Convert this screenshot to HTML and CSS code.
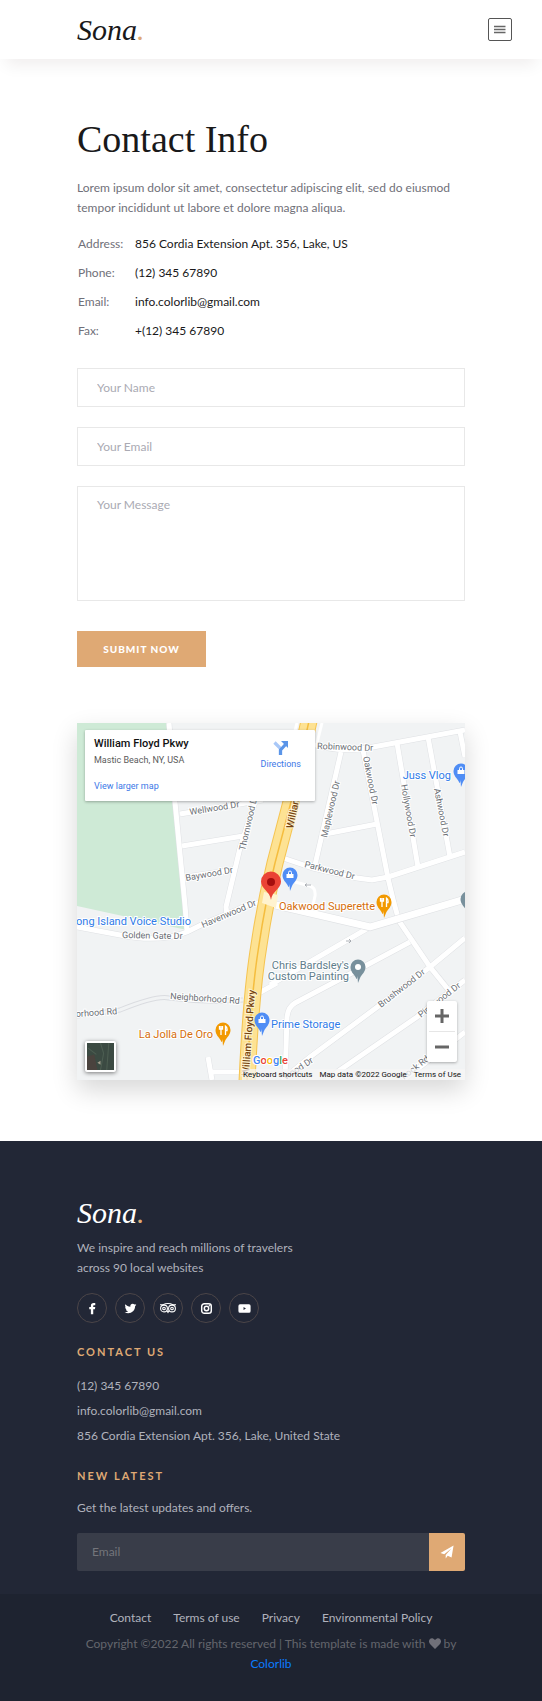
FILE: index.html
```html
<!DOCTYPE html>
<html lang="en">
<head>
<meta charset="utf-8">
<meta name="viewport" content="width=device-width, initial-scale=1">
<title>Sona - Contact</title>
<link rel="stylesheet" href="styles.css">
</head>
<body>
<header class="site-header">
  <a class="logo" href="#">Sona<span class="logo-dot">.</span></a>
  <button class="menu-btn" type="button" aria-label="Open menu">
    <svg viewBox="0 0 12 10" width="12" height="10"><path d="M0 1.500h11.500M0 4.500h11.500M0 7.500h11.500" stroke="#666" stroke-width="1.600"/></svg>
  </button>
</header>

<main class="container">
  <section class="intro">
    <h1>Contact Info</h1>
    <p>Lorem ipsum dolor sit amet, consectetur adipiscing elit, sed do eiusmod<br>tempor incididunt ut labore et dolore magna aliqua.</p>
    <table class="details">
      <tr><th scope="row">Address:</th><td>856 Cordia Extension Apt. 356, Lake, US</td></tr>
      <tr><th scope="row">Phone:</th><td>(12) 345 67890</td></tr>
      <tr><th scope="row">Email:</th><td>info.colorlib@gmail.com</td></tr>
      <tr><th scope="row">Fax:</th><td>+(12) 345 67890</td></tr>
    </table>
  </section>

  <form class="contact-form">
    <input class="field" type="text" placeholder="Your Name" aria-label="Your Name">
    <input class="field" type="email" placeholder="Your Email" aria-label="Your Email">
    <textarea class="field field-message" placeholder="Your Message" aria-label="Your Message"></textarea>
    <button class="submit-btn" type="submit">SUBMIT NOW</button>
  </form>

  <section class="map" aria-label="Map">
    <svg class="map-canvas" viewBox="0 0 388 357">
      <defs>
        <g id="roads">
          <path d="M92 0L98 79L108 182L110 208"/>
          <path d="M103 91L163 81L186 77"/>
          <path d="M105 123L166 113"/>
          <path d="M108 154L157 147"/>
          <path d="M178 79L163 125L149 184L150 192"/>
          <path d="M0 204L43 212Q82 220 110 209L126 201L160 187Q178 177 190 181"/>
          <path d="M232 20Q262 31 296 24L388 7"/>
          <path d="M264 29L238 142"/>
          <path d="M286 27L311 155L317 180L322 198L353 244L374 270"/>
          <path d="M243 112L300 101"/>
          <path d="M320 20L341 144"/>
          <path d="M351 14L373 134"/>
          <path d="M383 9L388 34"/>
          <path d="M206 135L236 145L280 155L295 157L311 154L388 129"/>
          <path d="M193 262L293 204"/>
          <path d="M333 219L290 242L218 280Q211 284 210 294L208 357"/>
          <path d="M388 215L353 244L303 282L233 334L205 357"/>
          <path d="M388 257L340 294L263 347L250 357"/>
          <path d="M388 309L356 334L326 357"/>
          <path d="M182 270L200 260"/>
          <path d="M131 334L135 357M134 349H166"/>
        </g>
        <g id="pin">
          <path d="M0 14C-1-1 0 14-2 9C-4 5-7.500 3-7.500-2A7.500 7.500 0 0 1 7.500-2C7.500 3 4 5 2 9Z"/>
        </g>
      </defs>
      <rect width="388" height="357" fill="#f1f3f4"/>
      <path d="M0 0H91L110 207L0 183Z" fill="#ceead6"/>
      <use href="#roads" class="road-edge"/>
      <path class="road-edge-thin" d="M0 293L43 287Q80 272 92 275Q130 280 166 277"/>
      <use href="#roads" class="road-fill"/>
      <path class="road-core" d="M0 293L43 287Q80 272 92 275Q130 280 166 277"/>
      <path class="lane" d="M218 159L233 163Q239 165 238 173L236 182M220 0L217 12M245 0L240 20"/>
      <path class="road-edge main" d="M190 180L293 204L388 176"/>
      <path class="road-fill main" d="M190 180L293 204L388 176"/>
      <g fill="none">
        <path stroke="#f5c451" stroke-width="17" d="M232-2L214 79L198 140Q188 181 182 222Q174 270 170 359"/>
        <path stroke="#fde293" stroke-width="15" d="M232-2L214 79L198 140Q188 181 182 222Q174 270 170 359"/>
        <path stroke="#f5bd3e" stroke-width="1.500" d="M232-2L214 79L198 140Q188 181 182 222Q174 270 170 359"/>
      </g>
      <path d="M187 169L201 172L199 185L185 180Z" fill="#fff3cf"/>
      <g class="street">
        <text transform="translate(113 92) rotate(-9)">Wellwood Dr</text>
        <text transform="translate(168 128) rotate(-77)">Thornwood Dr</text>
        <text transform="translate(109 158) rotate(-10)">Baywood Dr</text>
        <text transform="translate(126 205) rotate(-23)">Havenwood Dr</text>
        <text x="45" y="215" transform="rotate(1 45 215)">Golden Gate Dr</text>
        <text transform="translate(240 26) rotate(2)">Robinwood Dr</text>
        <text transform="translate(250 115) rotate(-77)">Maplewood Dr</text>
        <text transform="translate(286 34) rotate(79)">Oakwood Dr</text>
        <text transform="translate(324 62) rotate(80)">Hollywood Dr</text>
        <text transform="translate(357 66) rotate(79)">Ashwood Dr</text>
        <text transform="translate(227 144) rotate(14)">Parkwood Dr</text>
        <text transform="translate(304 285) rotate(-38)">Brushwood Dr</text>
        <text transform="translate(344 295) rotate(-38)">Pinewood Dr</text>
        <text transform="translate(209 357) rotate(-33)">wood Dr</text>
        <text transform="translate(327 357) rotate(-38)">Rock Rd</text>
        <text transform="translate(93 276) rotate(4)">Neighborhood Rd</text>
        <text transform="translate(-1 294) rotate(-4)">orhood Rd</text>
      </g>
      <g class="highway">
        <text transform="translate(216 106) rotate(-78)">William Floyd</text>
        <text transform="translate(172 353) rotate(-86)">William Floyd Pkwy</text>
      </g>
      <g class="poi">
        <text x="114" y="202" class="poi-blue" text-anchor="end">Long Island Voice Studio</text>
        <text x="374" y="56" class="poi-blue" text-anchor="end">Juss Vlog</text>
        <text x="194" y="305" class="poi-blue">Prime Storage</text>
        <text x="298" y="187" class="poi-orange" text-anchor="end">Oakwood Superette</text>
        <text x="136" y="315" class="poi-orange" text-anchor="end">La Jolla De Oro</text>
        <text x="272" y="246" class="poi-grey" text-anchor="end">Chris Bardsley's</text>
        <text x="272" y="257" class="poi-grey" text-anchor="end">Custom Painting</text>
      </g>
      <g fill="#4f8df5"><use href="#pin" x="384" y="50"/><use href="#pin" x="213" y="154"/><use href="#pin" x="185" y="299"/></g>
      <g fill="#f29900"><use href="#pin" x="307" y="181"/><use href="#pin" x="146" y="309"/></g>
      <g fill="#78909c"><use href="#pin" x="281" y="246"/><use href="#pin" x="391" y="178"/></g>
      <circle cx="281" cy="244" r="3" fill="#fff"/>
      <g fill="#fff" stroke="#fff">
        <path d="M380.500 47h7v4h-7zM209.500 151h7v4h-7zM181.500 296h7v4h-7z" stroke="none"/>
        <path fill="none" d="M382.500 47v-1.500a1.500 1.500 0 0 1 3 0V47M211.500 151v-1.500a1.500 1.500 0 0 1 3 0v1.500M183.500 296v-1.500a1.500 1.500 0 0 1 3 0v1.500"/>
        <path fill="none" stroke-width="1.300" d="M305 175v9M303.500 175v3h3v-3M309.500 184v-9q2 1 1.500 4.500h-1.500M144 303v9M142.500 303v3h3v-3M148.500 312v-9q2 1 1.500 4.500h-1.500"/>
      </g>
      <path d="M194 177C193 168 184 166 184 158.500A10 10 0 0 1 204 158.500C204 166 195 168 194 177Z" fill="#ea4335"/>
      <circle cx="194" cy="159" r="4" fill="#a50e0e"/>
      <path d="M228 162h6M228 162l2-1.500M228 162l2 1.500M269 218h5M274 218l-2-2M274 218l-2 2" stroke="#9aa0a6" fill="none" stroke-width=".8"/>
      <g class="brand"><text x="176" y="341"><tspan fill="#4285f4">G</tspan><tspan fill="#ea4335">o</tspan><tspan fill="#fbbc04">o</tspan><tspan fill="#4285f4">g</tspan><tspan fill="#34a853">l</tspan><tspan fill="#ea4335">e</tspan></text></g>
    </svg>
    <div class="place-card">
      <div class="place-info">
        <strong>William Floyd Pkwy</strong>
        <span>Mastic Beach, NY, USA</span>
        <a href="#">View larger map</a>
      </div>
      <a class="directions" href="#">
        <svg viewBox="0 0 16 16" width="16" height="16"><path d="M1.500 2.500L7.500 8.500V15" fill="none" stroke="#a9c8f8" stroke-width="3.200"/><path d="M7.500 15V10L12.500 4.500" fill="none" stroke="#5b95e8" stroke-width="3.200"/><path d="M8 1h7v7z" fill="#5b95e8"/></svg>
        Directions
      </a>
    </div>
    <button class="satellite" type="button" aria-label="Show satellite imagery">
      <svg viewBox="0 0 26 26" width="27" height="27"><rect width="26" height="26" fill="#3b4a42"/><path d="M0 13L7 11L10 26H0Z" fill="#4a433e"/><path d="M13 0L16 10L13 26M21 0L19 26M1 5L9 11" stroke="#4d5e52" fill="none"/><path d="M10 19l3-2v4z" fill="#a39f8d"/></svg>
    </button>
    <div class="zoom">
      <button type="button" aria-label="Zoom in"><svg viewBox="0 0 14 14" width="14" height="14"><path d="M7 0v14M0 7h14" stroke="#666" stroke-width="3"/></svg></button>
      <button type="button" aria-label="Zoom out"><svg viewBox="0 0 14 14" width="14" height="14"><path d="M0 7h14" stroke="#666" stroke-width="3"/></svg></button>
    </div>
    <div class="attribution"><a href="#">Keyboard shortcuts</a><span>Map data ©2022 Google</span><a href="#">Terms of Use</a></div>
  </section>
</main>

<footer class="site-footer">
  <div class="container footer-main">
    <a class="logo" href="#">Sona<span class="logo-dot">.</span></a>
    <p class="tagline">We inspire and reach millions of travelers<br>across 90 local websites</p>
    <nav class="social" aria-label="Social">
      <a href="#" aria-label="Facebook"><svg viewBox="0 0 16 16"><path fill="#fff" d="M6 15V9H4V6.300h2V4.800C6 2.400 7.300 1.300 9.400 1.300h2v2.600H10c-.9 0-1.100.4-1.100 1.200v1.200h2.500L11 9H8.900v6z"/></svg></a>
      <a href="#" aria-label="Twitter"><svg viewBox="0 0 16 16"><path fill="#fff" d="M15.200 3.500c-.6.300-1.100.4-1.700.5.600-.4 1.100-1 1.300-1.600-.6.300-1.200.6-1.900.7A3 3 0 0 0 7.800 5.800C5.300 5.700 3.200 4.500 1.700 2.700c-.8 1.400-.4 3.100.9 4-.5 0-.9-.2-1.300-.4 0 1.500 1 2.700 2.400 3-.5.100-.9.100-1.400 0 .4 1.200 1.500 2 2.800 2.100-1.200 1-2.800 1.500-4.400 1.200C6.400 16 13.700 12.300 13.700 5c.6-.4 1.100-.9 1.500-1.500z"/></svg></a>
      <a href="#" aria-label="Tripadvisor"><svg viewBox="0 0 16 16" class="wide"><g fill="none" stroke="#fff" stroke-width="1.100"><circle cx="4" cy="8.500" r="3.400"/><circle cx="12" cy="8.500" r="3.400"/><circle cx="4" cy="8.500" r="1.300"/><circle cx="12" cy="8.500" r="1.300"/><path d="M0 4.800h3Q8 2.200 13 4.800h3M6.800 10.500L8 12.500l1.200-2"/></g></svg></a>
      <a href="#" aria-label="Instagram"><svg viewBox="0 0 16 16"><g fill="none" stroke="#fff" stroke-width="1.800"><rect x="2.100" y="2.100" width="11.800" height="11.800" rx="3.200"/><circle cx="8" cy="8" r="2.700"/></g><circle cx="11.500" cy="4.600" r=".9" fill="#fff"/></svg></a>
      <a href="#" aria-label="YouTube"><svg viewBox="0 0 16 16"><path fill="#fff" fill-rule="evenodd" d="M2.500 2.700h11q2 0 2 2.300v6q0 2.300-2 2.300h-11q-2 0-2-2.300V5q0-2.300 2-2.300zM6.800 6.300v3.400L9.800 8z"/></svg></a>
    </nav>
    <h2>CONTACT US</h2>
    <ul class="contacts">
      <li>(12) 345 67890</li>
      <li>info.colorlib@gmail.com</li>
      <li>856 Cordia Extension Apt. 356, Lake, United State</li>
    </ul>
    <h2>NEW LATEST</h2>
    <p class="offer">Get the latest updates and offers.</p>
    <form class="newsletter">
      <input type="email" placeholder="Email" aria-label="Email">
      <button type="submit" aria-label="Subscribe"><svg viewBox="0 0 16 16" width="14" height="14"><path fill="#fff" d="M15.500.5L13.200 14.200L8.800 12.400L6.500 15.500V11.500L13 4L4.800 10.700L.5 9z"/></svg></button>
    </form>
  </div>
  <div class="footer-bottom">
    <nav class="links" aria-label="Footer"><a href="#">Contact</a><a href="#">Terms of use</a><a href="#">Privacy</a><a href="#">Environmental Policy</a></nav>
    <p>Copyright ©2022 All rights reserved | This template is made with <svg class="heart" viewBox="0 0 12 11" width="12" height="11"><path fill="#707079" d="M6 11L1 6C-1.500 3 1-.5 4 .5Q5.300 1 6 2Q6.700 1 8 .5C11-.5 13.500 3 11 6Z"/></svg> by<br><a href="#">Colorlib</a></p>
  </div>
</footer>
</body>
</html>
```
FILE: styles.css
```css
* { box-sizing: border-box; }
body { margin: 0; background: #fff; color: #707079; font: 12px/20px Lato, "Open Sans", sans-serif; }
h1, h2, p, ul { margin: 0; padding: 0; }
a { color: inherit; text-decoration: none; }
button { padding: 0; border: 0; font: inherit; cursor: pointer; }
input, textarea { font: inherit; min-width: 0; border-radius: 0; }
.container { padding: 0 77px; }

.site-header { display: flex; align-items: center; justify-content: space-between; height: 59px; padding: 0 30px 0 77px; box-shadow: 0 12px 15px -6px rgba(36, 11, 12, .07); }
.logo { display: block; font: italic 30px/34px "Liberation Serif", serif; color: #19191a; }
.logo-dot { color: #dfa974; }
.menu-btn { display: grid; place-items: center; width: 24px; height: 23px; background: #fff; border: 1px solid #555; border-radius: 2px; }

.intro { padding-top: 56px; }
h1 { font: 38px/48px "Liberation Serif", serif; color: #19191a; }
.intro p { margin-top: 15px; }
.details { margin-top: 11px; border-collapse: collapse; }
.details th, .details td { height: 29px; padding: 0; text-align: left; font-weight: 400; }
.details th { width: 58px; padding-left: 1px; }
.details td { color: #19191a; }

.contact-form { display: flex; flex-direction: column; align-items: flex-start; margin-top: 23px; }
.field { display: block; width: 100%; height: 39px; margin-bottom: 20px; padding: 0 19px; border: 1px solid #e8e8e8; background: #fff; outline: 0; }
.field-message { height: 115px; margin-bottom: 30px; padding-top: 8px; resize: none; }
.field::placeholder { color: #aaaab3; opacity: 1; }
.submit-btn { width: 129px; height: 36px; background: #dfa974; color: #fff; font-size: 10px; font-weight: 900; letter-spacing: 1px; }

.map { position: relative; margin-top: 56px; font-family: Roboto, sans-serif; box-shadow: 0 10px 24px rgba(0, 0, 0, .16); }
.map-canvas { display: block; width: 100%; height: auto; }
.road-edge { fill: none; stroke: #dfe1e4; stroke-width: 6px; }
.road-fill { fill: none; stroke: #fff; stroke-width: 5px; }
.road-edge.main { stroke-width: 8px; }
.road-fill.main { stroke-width: 7px; }
.road-edge-thin { fill: none; stroke: #dadce0; stroke-width: 5px; }
.road-core { fill: none; stroke: #f1f3f4; stroke-width: 3px; }
.lane { fill: none; stroke: #fff; stroke-width: 3px; }
.street { font-size: 9px; fill: #6b6f75; stroke: #fff; stroke-width: 2px; paint-order: stroke; }
.highway { font-size: 10px; font-weight: 500; fill: #75420c; stroke: #fff4cf; stroke-width: 2px; paint-order: stroke; }
.poi { font-size: 11px; stroke: #fff; stroke-width: 2px; paint-order: stroke; }
.poi-blue { fill: #2f7be8; }
.poi-orange { fill: #d56e0c; }
.poi-grey { fill: #607d8b; }
.brand { font: 500 11px Roboto, sans-serif; stroke: #fff; stroke-width: 2px; paint-order: stroke; }

.place-card { position: absolute; top: 7px; left: 8px; display: flex; justify-content: space-between; width: 230px; height: 71px; padding: 7px 14px 7px 9px; background: #fff; border-radius: 1px; box-shadow: 0 1px 3px rgba(0, 0, 0, .3); font-size: 9px; line-height: 12px; }
.place-info { display: flex; flex-direction: column; color: #5b5b5b; }
.place-info strong { font-size: 11px; line-height: 14px; font-weight: 500; color: #111; }
.place-info span { margin-top: 3px; }
.place-info a { margin-top: 14px; }
.place-card a { color: #3c78e7; }
.directions { display: flex; flex-direction: column; align-items: center; gap: 2px; padding-top: 3px; }
.satellite { position: absolute; left: 8px; bottom: 8px; display: grid; place-items: center; width: 31px; height: 31px; background: #fff; border-radius: 2px; box-shadow: 0 1px 4px rgba(0, 0, 0, .5); }
.zoom { position: absolute; right: 8px; bottom: 18px; display: grid; width: 30px; height: 61px; background: #fff; border-radius: 2px; box-shadow: 0 1px 3px rgba(0, 0, 0, .3); }
.zoom button { display: grid; place-items: center; background: none; }
.zoom button + button { margin: 0 2px; border-top: 1px solid #e6e6e6; }
.attribution { position: absolute; right: 0; bottom: 0; display: flex; gap: 7px; padding: 0 4px 0 1px; background: rgba(245, 245, 245, .75); color: #111; font-size: 8px; line-height: 11px; white-space: nowrap; }

.site-footer { margin-top: 61px; background: #222736; color: #b0b2bc; }
.footer-main { padding-top: 55px; padding-bottom: 23px; }
.site-footer .logo { color: #fff; }
.tagline { margin-top: 8px; }
.social { display: flex; gap: 8px; margin-top: 15px; }
.social a { display: grid; place-items: center; width: 30px; height: 30px; border: 1px solid #4b4548; border-radius: 50%; }
.social svg { width: 13px; height: 13px; }
.social .wide { width: 16px; height: 16px; }
h2 { margin-top: 19px; font-size: 11px; line-height: 20px; font-weight: 700; letter-spacing: 2px; color: #dfa974; }
.contacts { margin-top: 11px; list-style: none; line-height: 25px; }
.contacts + h2 { margin-top: 18px; }
.offer { margin-top: 12px; }
.newsletter { display: flex; height: 38px; margin-top: 15px; }
.newsletter input { flex: 1; padding: 0 15px; border: 0; border-radius: 2px 0 0 2px; background: #393d49; color: #fff; outline: 0; }
.newsletter input::placeholder { color: #74757b; opacity: 1; }
.newsletter button { display: grid; place-items: center; width: 36px; background: #dfa974; border-radius: 0 2px 2px 0; }
.footer-bottom { padding: 14px 77px 27px; background: #1e2330; text-align: center; }
.links { display: flex; justify-content: center; gap: 22px; margin-bottom: 6px; }
.footer-bottom p { color: #64666d; white-space: nowrap; }
.footer-bottom p a { color: #0b7bff; }
.heart { vertical-align: -1px; }
```
